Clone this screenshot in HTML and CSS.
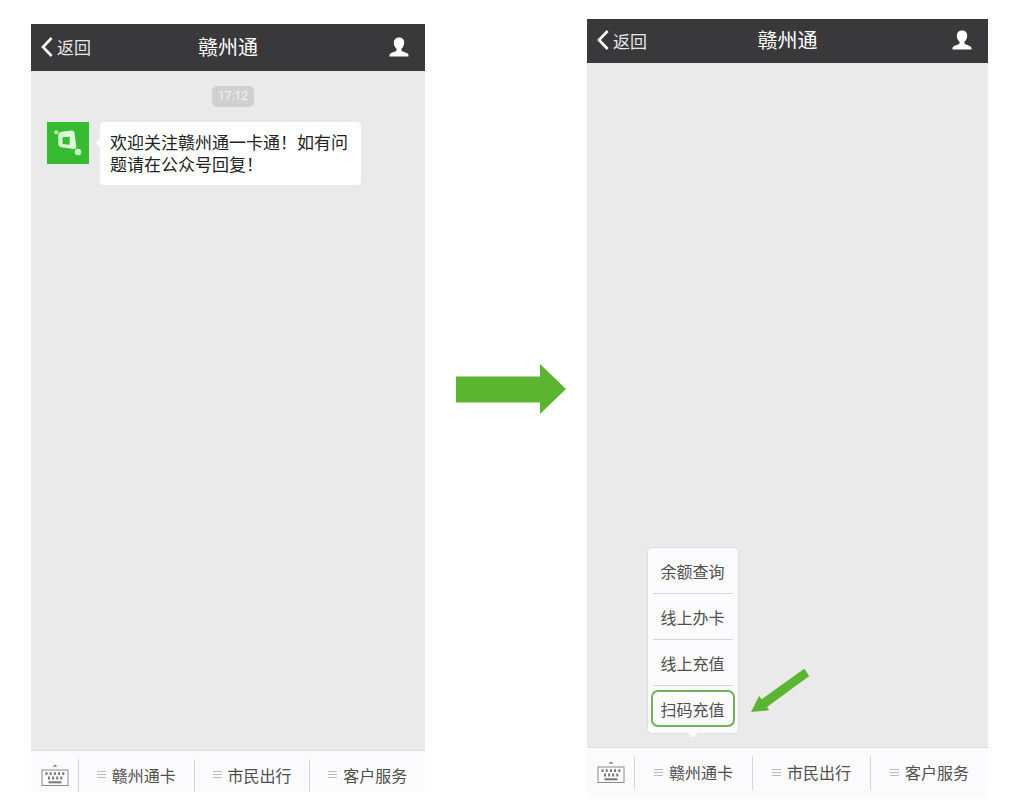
FILE: index.html
```
<!DOCTYPE html>
<html lang="zh-CN">
<head>
    <meta charset="UTF-8">
    <meta name="viewport" content="width=device-width, initial-scale=1.0">
    <title>赣州通</title>
    <link rel="stylesheet" href="styles.css">
</head>
<body>
    <!-- Shared icons -->
    <svg class="icon-defs" aria-hidden="true">
        <symbol id="icon-back" viewBox="0 0 12 20">
            <path d="M10.600 1L2 10l8.600 9" fill="none" stroke="#fff" stroke-width="2.600"/>
        </symbol>
        <symbol id="icon-user" viewBox="0 0 20 20">
            <path d="M10 .5C6.700.5 4.800 2.500 4.800 5.500c0 2.600 1 4.800 2.700 6v1.900C7 15 1 15 .5 18v1.500h19V18C19 15 13 15 12.500 13.400v-1.900c1.700-1.200 2.700-3.400 2.700-6 0-3-1.900-5-5.200-5z" fill="#fff"/>
        </symbol>
        <symbol id="icon-keyboard" viewBox="0 0 28 24">
            <path d="M11.500 2.500L14 .8l2.500 1.700z" fill="#666"/>
            <rect x="1" y="6" width="26" height="15.500" fill="none" stroke="#8a8a8a"/>
            <path d="M4.500 9.700h19" stroke="#777" stroke-width="2.800" stroke-dasharray="2 2.200"/>
            <path d="M7 14h14.500" stroke="#777" stroke-width="2.800" stroke-dasharray="2 2.100"/>
            <path d="M7.500 18.300h13" stroke="#777" stroke-width="2"/>
        </symbol>
    </svg>

    <main class="stage">
        <section class="phone phone-chat">
            <header class="top-bar">
                <button class="back" type="button"><svg class="back-icon"><use href="#icon-back"/></svg>返回</button>
                <h1 class="title">赣州通</h1>
                <button class="profile" type="button" aria-label="公众号资料"><svg class="user-icon"><use href="#icon-user"/></svg></button>
            </header>
            <div class="chat">
                <time class="time">17:12</time>
                <div class="message">
                    <svg class="avatar" viewBox="0 0 42 42">
                        <rect width="42" height="42" fill="#37bb30"/>
                        <path fill-rule="evenodd" fill="#dcfbd8" d="M14.500 9.800L24.500 8.400q2.600-.2 3 2.200L29.300 24.500q.2 2.700-2.400 2.500L14 25.200q-2.500-.5-2.700-3V13q.3-2.700 3.200-3.200zM15.500 15.300v6.700l7.200.7v-8z"/>
                        <circle cx="9.300" cy="10.300" r="2.100" fill="#bdf2b8"/>
                        <circle cx="31" cy="30" r="3.300" fill="#c5f5c0"/>
                    </svg>
                    <p class="bubble">欢迎关注赣州通一卡通！如有问题请在公众号回复！</p>
                </div>
            </div>
            <nav class="tabs">
                <button class="keyboard" type="button" aria-label="键盘"><svg class="keyboard-icon"><use href="#icon-keyboard"/></svg></button>
                <div class="tab"><button class="tab-button" type="button"><i class="lines"></i>赣州通卡</button></div>
                <div class="tab"><button class="tab-button" type="button"><i class="lines"></i>市民出行</button></div>
                <div class="tab"><button class="tab-button" type="button"><i class="lines"></i>客户服务</button></div>
            </nav>
        </section>

        <svg class="next-arrow" viewBox="0 0 110 50" aria-hidden="true">
            <path d="M0 12.500h84V0l26 25-26 25V38.500H0z" fill="#5cb531"/>
        </svg>

        <section class="phone phone-menu">
            <header class="top-bar">
                <button class="back" type="button"><svg class="back-icon"><use href="#icon-back"/></svg>返回</button>
                <h1 class="title">赣州通</h1>
                <button class="profile" type="button" aria-label="公众号资料"><svg class="user-icon"><use href="#icon-user"/></svg></button>
            </header>
            <div class="chat"></div>
            <nav class="tabs">
                <button class="keyboard" type="button" aria-label="键盘"><svg class="keyboard-icon"><use href="#icon-keyboard"/></svg></button>
                <div class="tab">
                    <button class="tab-button" type="button"><i class="lines"></i>赣州通卡</button>
                    <div class="menu">
                        <button class="menu-item" type="button">余额查询</button>
                        <button class="menu-item" type="button">线上办卡</button>
                        <button class="menu-item" type="button">线上充值</button>
                        <button class="menu-item marked" type="button">扫码充值</button>
                        <svg class="hint-arrow" viewBox="0 0 60 46" aria-hidden="true">
                            <path d="M0 44L8 28l2.700 3.300L53.300.7l5 7.300L16 39l2.300 3.300z" fill="#5cb531"/>
                        </svg>
                    </div>
                </div>
                <div class="tab"><button class="tab-button" type="button"><i class="lines"></i>市民出行</button></div>
                <div class="tab"><button class="tab-button" type="button"><i class="lines"></i>客户服务</button></div>
            </nav>
        </section>
    </main>
</body>
</html>
```

FILE: styles.css
```
* {
    box-sizing: border-box;
}
body {
    margin: 0;
    background-color: #ffffff;
    font-family: "Noto Sans CJK SC", sans-serif;
    font-size: 16px;
    color: #505050;
}
button {
    margin: 0;
    padding: 0;
    border: none;
    background: none;
    font: inherit;
    color: inherit;
    cursor: pointer;
}
svg {
    display: block;
}
.icon-defs {
    display: none;
}
.stage {
    display: grid;
    grid-template-columns: 394fr 162px 401fr;
    min-height: 100vh;
    padding: 19px 31px 14px;
}
.phone {
    display: flex;
    flex-direction: column;
    background-color: #eaeaeb;
}
.phone-chat {
    margin: 5px 0 6px;
}
.next-arrow {
    align-self: center;
    width: 110px;
    height: 50px;
    margin: 0 0 40px 31px;
}

/* Top bar */
.top-bar {
    display: grid;
    grid-template-columns: 1fr auto 1fr;
    align-items: center;
    height: 44px;
    padding: 0 10px 2px;
    background-color: #39383b;
    color: #ffffff;
}
.phone-chat .top-bar {
    height: 47px;
}
.back {
    display: flex;
    align-items: center;
    gap: 4px;
    color: #e6e6e6;
    font-size: 17px;
}
.back-icon {
    width: 12px;
    height: 20px;
}
.title {
    margin: 0;
    font-size: 20px;
    font-weight: 400;
    line-height: 28px;
}
.profile {
    justify-self: end;
    padding: 0 6px;
}
.user-icon {
    width: 20px;
    height: 20px;
}

/* Conversation */
.chat {
    flex: 1;
    display: flex;
    flex-direction: column;
    align-items: center;
    padding: 15px 6px 15px 16px;
}
.time {
    padding: 0 6px;
    border-radius: 5px;
    background-color: #d0d0d1;
    color: #f3f3f3;
    font-family: Roboto, sans-serif;
    font-size: 12px;
    line-height: 21px;
}
.message {
    display: flex;
    align-self: stretch;
    gap: 11px;
    margin-top: 15px;
}
.avatar {
    flex: none;
    width: 42px;
    height: 42px;
}
.bubble {
    position: relative;
    max-width: 261px;
    margin: 0;
    padding: 9px 10px 10px;
    border-radius: 4px;
    background-color: #ffffff;
    color: #222222;
    font-size: 17px;
    line-height: 22px;
}
.bubble::before {
    content: "";
    position: absolute;
    top: 17px;
    left: -4px;
    border: 4px solid transparent;
    border-right-color: #ffffff;
    border-left: 0;
}

/* Bottom tabs */
.tabs {
    display: flex;
    height: 51px;
    padding: 8px 0;
    border-top: 1px solid #dcdcdd;
    background-color: #fbfafc;
}
.phone-chat .tabs {
    height: 42px;
    padding-bottom: 0;
}
.keyboard {
    flex: none;
    display: flex;
    align-items: center;
    justify-content: center;
    width: 47px;
}
.keyboard-icon {
    width: 28px;
    height: 24px;
}
.tab {
    position: relative;
    flex: 1;
    display: flex;
    border-left: 1px solid #d6d6d8;
}
.tab-button {
    flex: 1;
    display: flex;
    align-items: center;
    justify-content: center;
    gap: 6px;
    padding-bottom: 2px;
}
.lines {
    width: 9px;
    height: 7px;
    border-top: 1px solid #bcbcbe;
    border-bottom: 1px solid #bcbcbe;
    background: linear-gradient(#bcbcbe, #bcbcbe) center / 100% 1px no-repeat;
}

/* Pop-up menu */
.menu {
    position: absolute;
    bottom: 56px;
    left: 50%;
    width: 92px;
    margin-left: -47px;
    padding: 0 5px 2px;
    border: 1px solid #dededf;
    border-radius: 5px;
    background-color: #fbfafc;
}
.menu::after {
    content: "";
    position: absolute;
    top: 100%;
    left: 50%;
    margin-left: -5px;
    border: 5px solid transparent;
    border-top-color: #fbfafc;
    border-bottom: 0;
}
.menu-item {
    display: block;
    width: 100%;
    height: 46px;
    border-bottom: 1px solid #d6d6d8;
}
.menu-item.marked {
    height: 37px;
    margin: 4px -2px;
    width: 84px;
    border: 2px solid #74b05c;
    border-radius: 7px;
}
.hint-arrow {
    position: absolute;
    bottom: 19px;
    left: 103px;
    width: 60px;
    height: 46px;
}
```
